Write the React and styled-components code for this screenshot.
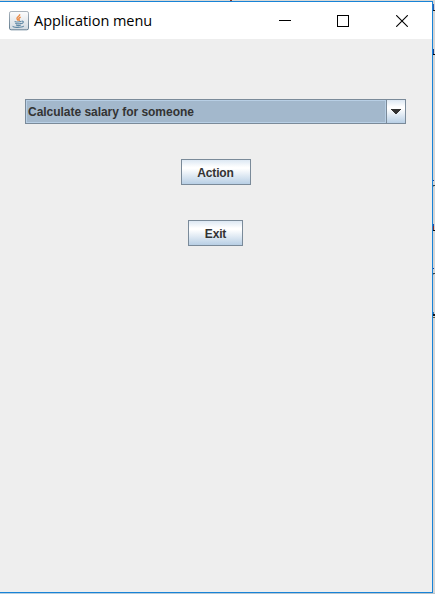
import React from "react";
import styled, { createGlobalStyle } from "styled-components";

const GlobalStyle = createGlobalStyle`
  * { box-sizing: border-box; }
  html, body { margin: 0; padding: 0; overflow: hidden; }
`;

const Desktop = styled.div`
  display: grid;
  grid-template-columns: 433px 2px;
  grid-template-rows: 1px 592px 1px;
  width: 435px;
  height: 594px;
  background: #d5d5d5;
`;

const TopEdge = styled.div`
  grid-column: 1 / -1;
  display: flex;
  padding-left: 230px;
  background: #d9d9d6;
`;

const EdgeMark = styled.span`
  width: 2px;
  height: 1px;
  background: #8a3a25;
`;

const BottomEdge = styled.div`
  grid-column: 1 / -1;
  background: linear-gradient(90deg, #b5cfe2, #b8c4cc);
`;

const SideStrip = styled.svg`
  display: block;
  width: 2px;
  height: 592px;
`;

const Window = styled.main`
  display: flex;
  flex-direction: column;
  border: solid #1883d7;
  border-width: 1px 1px 1px 0;
  background: #eeeeee;
`;

const TitleBar = styled.header`
  display: flex;
  align-items: center;
  flex: 0 0 37px;
  padding-left: 9px;
  background: #fff;
`;

const Title = styled.h1`
  flex: 1;
  margin: 1px 0 0 5px;
  font: 400 14.5px/20px "Open Sans", "Noto Sans", sans-serif;
  letter-spacing: -0.04px;
  color: #000;
  white-space: nowrap;
`;

const CaptionButtons = styled.div`
  display: flex;
  align-self: stretch;
  margin-right: 1px;
`;

const CaptionButton = styled.button`
  display: flex;
  align-items: center;
  justify-content: center;
  width: 58px;
  padding: 0;
  border: 0;
  background: transparent;

  &:last-child { margin-left: 1px; }
`;

const Content = styled.section`
  display: flex;
  flex-direction: column;
  align-items: center;
  padding: 60px 1px 0 0;
`;

const Combo = styled.div`
  display: flex;
  width: 381px;
  height: 25px;
  border: 1px solid #7a8a99;
  font: 700 12px/22px "Liberation Sans", Arial, sans-serif;
  letter-spacing: -0.03px;
  color: #333;
`;

const ComboValue = styled.div`
  display: flex;
  align-items: center;
  flex: 1;
  padding-left: 1px;
  border: 1px solid #b8cfe5;
  background: #a3b8cc;
  white-space: nowrap;
`;

const ComboArrow = styled.button`
  display: flex;
  align-items: center;
  justify-content: center;
  width: 19px;
  padding: 0;
  border: 0;
  border-left: 1px solid #7a8a99;
  background: linear-gradient(#dde8f3, #fff 30%, #fff 38%, #b8cfe5);
`;

const MetalButton = styled.button`
  width: ${(p) => p.$width}px;
  height: 26px;
  margin-top: 35px;
  padding: 1px 0 0;
  border: 1px solid #7a8a99;
  background: linear-gradient(#dde8f3, #fff 30%, #fff 36%, #b8cfe5);
  color: #333;
  font: 700 12px/22px "Liberation Sans", Arial, sans-serif;
  letter-spacing: -0.15px;
`;

function JavaIcon() {
  return (
    <svg width="20" height="20" viewBox="0 0 20 20" aria-hidden="true">
      <defs>
        <linearGradient id="tile" x1="0" y1="0" x2="0" y2="1">
          <stop offset="0" stopColor="#fdfdfd" />
          <stop offset="1" stopColor="#d3dae0" />
        </linearGradient>
        <linearGradient id="rim" x1="0" y1="0" x2="0" y2="1">
          <stop offset="0" stopColor="#a9b3bc" />
          <stop offset="1" stopColor="#627c90" />
        </linearGradient>
      </defs>
      <rect x="0.5" y="0.5" width="19" height="18.3" rx="1.6" fill="url(#tile)" stroke="url(#rim)" />
      <path d="M10.6 3.2c.8 1.9-3.1 2.7-2.6 4.4.1.8.8 1.3 1.2 2M11.7 6.2c-1.6.7-2.3 1.3-1.7 2.1.5.7.4 1.2-.1 1.7" fill="none" stroke="#eb8a45" strokeWidth="1.4" />
      <path d="M5.6 10.4c1.5.6 5.2.6 6.8-.1M6.3 12.3c1.4.8 4.5.8 5.8 0M7 14c1.3.6 3.7.6 4.8 0M12.7 10.2c2.6-.4 1.9 2-.4 2.4M4 15.1c-.5 1 3.5 1.5 6.7 1.2 2.3-.2 4.2-.7 3.6-1.4" fill="none" stroke="#6088a4" strokeWidth="1.1" />
    </svg>
  );
}

const marks = [
  [0, 3, 1, 6, "#315caa"], [0, 9, 2, 1, "#151515"],
  [0, 48, 1, 5, "#173f8e"], [0, 53, 2, 1, "#080808"],
  [0, 179, 1, 1, "#143e9b"], [0, 184, 2, 1, "#3b4548"], [0, 185, 1, 1, "#96a0a7"],
  [0, 223, 1, 2, "#244fa0"], [0, 225, 1, 4, "#852d2d"], [0, 229, 2, 1, "#080808"],
  [0, 267, 1, 1, "#143e9b"], [0, 272, 2, 1, "#3b4548"], [0, 273, 1, 1, "#a5a397"],
  [0, 311, 1, 2, "#356ca4"], [0, 313, 2, 2, "#171717"], [0, 316, 2, 1, "#625c41"],
];

export default function App() {
  return (
    <>
      <GlobalStyle />
      <Desktop>
        <TopEdge><EdgeMark /></TopEdge>
        <Window>
          <TitleBar>
            <JavaIcon />
            <Title>Application menu</Title>
            <CaptionButtons>
              <CaptionButton aria-label="Minimize">
                <svg width="12" height="12" shapeRendering="crispEdges"><path d="M0 5.5h12" stroke="#000" /></svg>
              </CaptionButton>
              <CaptionButton aria-label="Maximize">
                <svg width="12" height="12" shapeRendering="crispEdges"><rect x=".5" y=".5" width="11" height="11" fill="none" stroke="#000" /></svg>
              </CaptionButton>
              <CaptionButton aria-label="Close">
                <svg width="12" height="12"><path d="M.2.2l11.6 11.6M11.8.2L.2 11.8" stroke="#000" strokeWidth="1.1" /></svg>
              </CaptionButton>
            </CaptionButtons>
          </TitleBar>
          <Content>
            <Combo role="combobox" aria-expanded="false">
              <ComboValue>Calculate salary for someone</ComboValue>
              <ComboArrow aria-label="Open">
                <svg width="10" height="5" shapeRendering="crispEdges"><path d="M0 0h10v1h-1v1h-1v1h-1v1h-1v1h-2v-1h-1v-1h-1v-1h-1v-1h-1z" fill="#333" /></svg>
              </ComboArrow>
            </Combo>
            <MetalButton $width={70}>Action</MetalButton>
            <MetalButton $width={55}>Exit</MetalButton>
          </Content>
        </Window>
        <SideStrip viewBox="0 0 2 592" shapeRendering="crispEdges" aria-hidden="true">
          {marks.map(([x, y, w, h, fill]) => (
            <rect key={`${x}-${y}`} x={x} y={y} width={w} height={h} fill={fill} />
          ))}
        </SideStrip>
        <BottomEdge />
      </Desktop>
    </>
  );
}
